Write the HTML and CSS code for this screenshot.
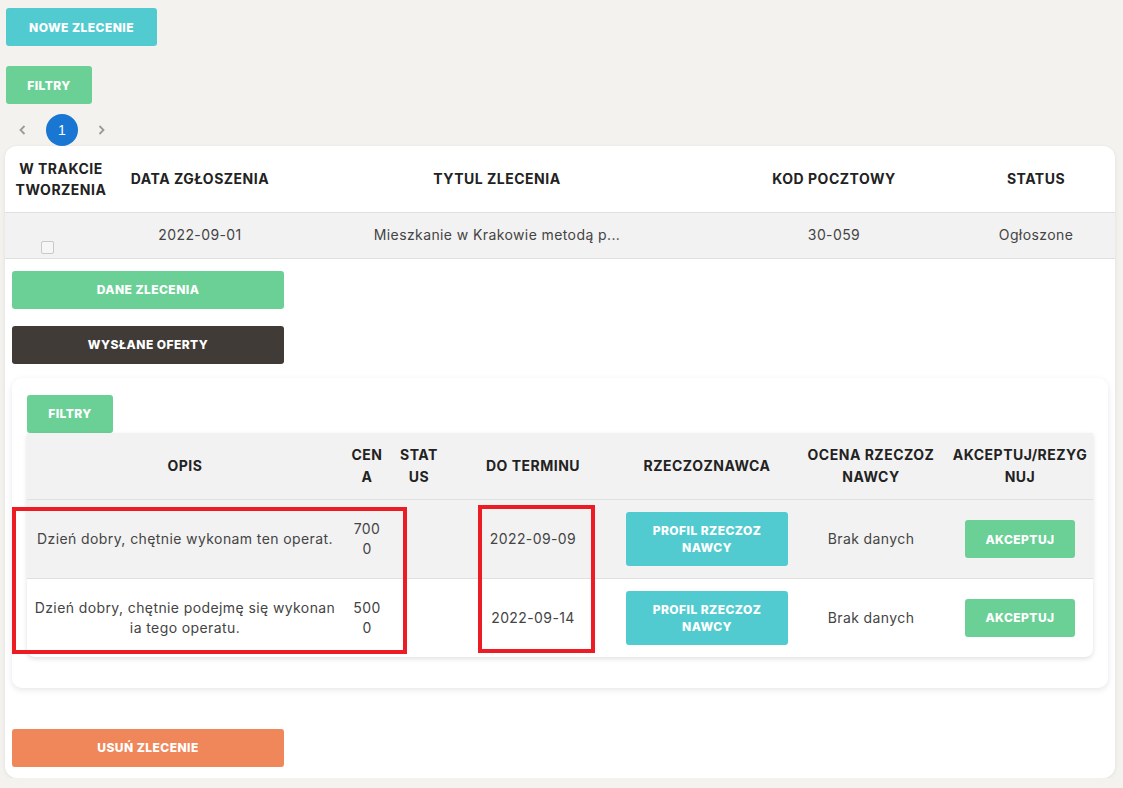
FILE: index.html
```html
<!DOCTYPE html>
<html lang="pl">
<head>
<meta charset="utf-8">
<title>Zlecenia</title>
<link rel="stylesheet" href="styles.css">
</head>
<body>
<div class="page">
  <div class="top-actions">
    <button class="btn btn-cyan btn-new">NOWE ZLECENIE</button>
    <button class="btn btn-green btn-filter">FILTRY</button>
  </div>
  <nav class="pager">
    <span class="pager-item pager-arrow">
      <svg width="12" height="12" viewBox="0 0 12 12"><path d="M7.5 2 L3.5 6 L7.5 10" fill="none" stroke="#9a9a9a" stroke-width="1.8"/></svg>
    </span>
    <span class="pager-item pager-current">1</span>
    <span class="pager-item pager-arrow">
      <svg width="12" height="12" viewBox="0 0 12 12"><path d="M4.5 2 L8.5 6 L4.5 10" fill="none" stroke="#9a9a9a" stroke-width="1.8"/></svg>
    </span>
  </nav>

  <div class="card">
    <table class="main-table">
      <colgroup>
        <col class="c-w1"><col class="c-w2"><col class="c-w3"><col class="c-w4"><col class="c-w5">
      </colgroup>
      <thead>
        <tr>
          <th>W TRAKCIE TWORZENIA</th>
          <th>DATA ZGŁOSZENIA</th>
          <th>TYTUL ZLECENIA</th>
          <th>KOD POCZTOWY</th>
          <th>STATUS</th>
        </tr>
      </thead>
      <tbody>
        <tr>
          <td class="check-cell"><span class="checkbox"></span></td>
          <td>2022-09-01</td>
          <td>Mieszkanie w Krakowie metodą p...</td>
          <td>30-059</td>
          <td>Ogłoszone</td>
        </tr>
      </tbody>
    </table>

    <div class="details">
      <button class="btn btn-green btn-wide">DANE ZLECENIA</button>
      <button class="btn btn-dark btn-wide">WYSŁANE OFERTY</button>

      <div class="offers-box">
        <button class="btn btn-green btn-filter">FILTRY</button>
        <div class="offers-card">
          <table class="offers-table">
            <colgroup>
              <col class="o-w1"><col class="o-w2"><col class="o-w3"><col class="o-w4"><col class="o-w5"><col class="o-w6"><col class="o-w7">
            </colgroup>
            <thead>
              <tr>
                <th>OPIS</th>
                <th>CENA</th>
                <th>STATUS</th>
                <th>DO TERMINU</th>
                <th>RZECZOZNAWCA</th>
                <th class="col-rating">OCENA RZECZOZNAWCY</th>
                <th class="col-accept">AKCEPTUJ/REZYGNUJ</th>
              </tr>
            </thead>
            <tbody>
              <tr class="row-gray">
                <td>Dzień dobry, chętnie wykonam ten operat.</td>
                <td>7000</td>
                <td></td>
                <td>2022-09-09</td>
                <td><button class="btn btn-cyan btn-profile">PROFIL RZECZOZNAWCY</button></td>
                <td>Brak danych</td>
                <td><button class="btn btn-green btn-accept">AKCEPTUJ</button></td>
              </tr>
              <tr>
                <td>Dzień dobry, chętnie podejmę się wykonania tego operatu.</td>
                <td>5000</td>
                <td></td>
                <td>2022-09-14</td>
                <td><button class="btn btn-cyan btn-profile">PROFIL RZECZOZNAWCY</button></td>
                <td>Brak danych</td>
                <td><button class="btn btn-green btn-accept">AKCEPTUJ</button></td>
              </tr>
            </tbody>
          </table>
        </div>
      </div>

      <button class="btn btn-orange btn-wide btn-delete">USUŃ ZLECENIE</button>
    </div>
  </div>
</div>

<div class="mark mark-desc"></div>
<div class="mark mark-date"></div>
</body>
</html>
```

FILE: styles.css
```css
* { box-sizing: border-box; }

html, body {
  margin: 0;
  padding: 0;
  background: #f3f2ef;
  font-family: "Inter", "DejaVu Sans", sans-serif;
  color: #444;
}

.page {
  padding: 8px 8px 0 5px;
  width: 1123px;
}

.top-actions {
  display: flex;
  flex-direction: column;
  align-items: flex-start;
  gap: 20px;
  padding-left: 1px;
}

.btn {
  border: none;
  border-radius: 3px;
  color: #fff;
  font-family: inherit;
  font-weight: 800;
  font-size: 12px;
  letter-spacing: 0.45px;
  height: 38px;
  cursor: pointer;
  display: block;
  padding: 0;
}

.btn-cyan { background: #52cbd0; }
.btn-green { background: #6bd096; }
.btn-dark { background: #403b37; }
.btn-orange { background: #f0875a; }

.btn-new { width: 151px; }
.btn-filter { width: 86px; }
.btn-wide { width: 272px; }

.pager {
  display: flex;
  align-items: center;
  height: 42px;
  padding: 10px 0 0 2px;
  gap: 7px;
}

.pager-item {
  width: 32px;
  height: 32px;
  display: flex;
  align-items: center;
  justify-content: center;
}

.pager-current {
  border-radius: 50%;
  background: #1976d2;
  color: #fff;
  font-family: "Liberation Sans", Arial, sans-serif;
  font-size: 14px;
}

.card {
  background: #fff;
  border-radius: 12px;
  width: 1110px;
  padding-bottom: 11px;
  box-shadow: 0 1px 4px rgba(0, 0, 0, 0.08);
}

table {
  border-collapse: collapse;
  table-layout: fixed;
}

.main-table {
  width: 100%;
}

.c-w1 { width: 112px; }
.c-w2 { width: 166px; }
.c-w3 { width: 428px; }
.c-w4 { width: 246px; }
.c-w5 { width: 158px; }

.main-table th {
  height: 66px;
  font-size: 14px;
  font-weight: 700;
  letter-spacing: 0.5px;
  color: #222;
  line-height: 21px;
  text-align: center;
  padding: 0 4px;
  border-bottom: 1px solid #e0e0e0;
}

.main-table td {
  height: 46px;
  background: #f2f2f2;
  font-size: 14px;
  letter-spacing: 0.4px;
  text-align: center;
  color: #444;
  border-bottom: 1px solid #e0e0e0;
  padding: 0 6px 2px;
}

.main-table td.check-cell {
  vertical-align: bottom;
  padding-bottom: 4px;
}

.checkbox {
  display: block;
  width: 13px;
  height: 13px;
  margin-left: 30px;
  border: 1px solid #c9c9c9;
  border-radius: 2px;
  background: #f6f6f6;
}

.details {
  padding: 12px 7px 0 7px;
}

.details > .btn-dark {
  margin-top: 17px;
}

.offers-box {
  margin-top: 14px;
  width: 1096px;
  background: #fff;
  border-radius: 10px;
  padding: 17px 15px 31px 15px;
  box-shadow: 0 2px 6px rgba(0, 0, 0, 0.1);
}

.offers-card {
  border-radius: 0 0 8px 8px;
  overflow: hidden;
  box-shadow: 0 2px 5px rgba(0, 0, 0, 0.12);
}

.offers-table {
  width: 1066px;
}

.o-w1 { width: 316px; }
.o-w2 { width: 48px; }
.o-w3 { width: 56px; }
.o-w4 { width: 172px; }
.o-w5 { width: 176px; }
.o-w6 { width: 152px; }
.o-w7 { width: 146px; }

.offers-table th {
  background: #f2f2f2;
  height: 67px;
  font-size: 14px;
  font-weight: 700;
  letter-spacing: 0.5px;
  color: #222;
  line-height: 22px;
  text-align: center;
  padding: 0 7px;
  word-break: break-all;
  border-bottom: 1px solid #e0e0e0;
}

.offers-table th.col-rating { padding: 0 10px; }
.offers-table th.col-accept { padding: 0 4px; }

.offers-table td {
  height: 79px;
  font-size: 14px;
  letter-spacing: 0.4px;
  line-height: 20px;
  color: #444;
  text-align: center;
  padding: 0 7px;
  word-break: break-all;
  border-bottom: 1px solid #e0e0e0;
}

.offers-table tbody tr:last-child td {
  border-bottom: none;
  height: 78px;
}

.row-gray td { background: #f2f2f2; }

.btn-profile {
  width: 162px;
  height: 54px;
  margin: 0 auto;
  line-height: 17px;
  padding: 0 22px;
  word-break: break-all;
}

.btn-accept {
  width: 110px;
  margin: 0 auto;
}

.btn-delete {
  margin-top: 41px;
}

.mark {
  position: absolute;
  border: 4px solid #ed1c24;
  pointer-events: none;
}

.mark-desc {
  left: 12px;
  top: 507px;
  width: 395px;
  height: 147px;
}

.mark-date {
  left: 478px;
  top: 505px;
  width: 117px;
  height: 148px;
}
```
